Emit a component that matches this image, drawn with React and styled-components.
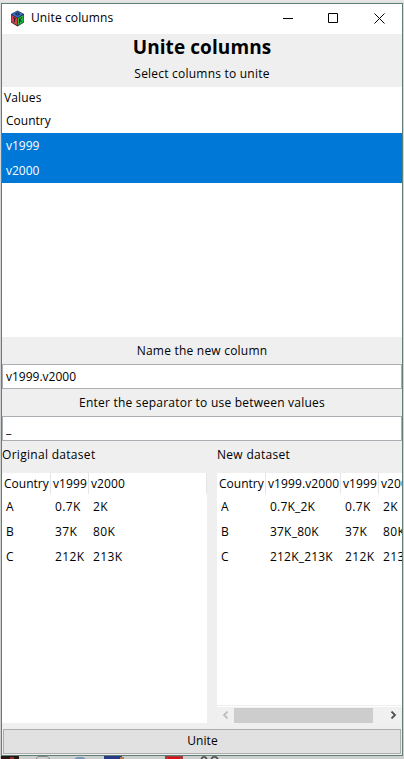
import React from 'react';
import styled, { createGlobalStyle } from 'styled-components';

const Global = createGlobalStyle`
  * { box-sizing: border-box; }
  html, body, #root { margin: 0; width: 404px; height: 759px; overflow: hidden; }
  body {
    font: 12px/20px "Open Sans", "Noto Sans", sans-serif;
    color: #000;
    background: #d4d6d6;
  }
`;

const Desktop = styled.div`
  width: 404px;
  height: 759px;
  padding: 3px 1px 0;
  background: linear-gradient(#e9e9e9 0, #dcdcdc 3px, #d2d6d5 40px, #cbd0ce 100%);
`;

const Window = styled.main`
  display: flex;
  flex-direction: column;
  height: 753px;
  border: 1px solid #5f8076;
  background: #efefef;
`;

const TitleBar = styled.header`
  display: flex;
  align-items: center;
  flex: 0 0 30px;
  padding: 0 0 2px 8px;
  background: #fff;
`;

const Text = styled.span`
  display: block;
  white-space: pre;
  letter-spacing: ${(p) => p.$spacing || 0}px;
`;

const Caption = styled(Text)`
  margin-left: 6px;
  flex: 1;
`;

const CaptionButton = styled.button`
  width: ${(p) => p.$width}px;
  height: 28px;
  padding: 0;
  border: 0;
  background: none;
  display: grid;
  place-items: center;
`;

const CaptionButtons = styled.div`
  display: flex;
`;

const Heading = styled.h1`
  margin: 0;
  flex: 0 0 27px;
  font-size: 19px;
  line-height: 26px;
  font-weight: 700;
  text-align: center;
  letter-spacing: 0.08px;
`;

const Prompt = styled(Text)`
  flex: 0 0 ${(p) => p.$height}px;
  min-height: 0;
  line-height: ${(p) => p.$line}px;
  text-align: center;
  letter-spacing: 0.22px;
`;

const List = styled.section`
  flex: 0 0 250px;
  background: #fff;
`;

const ListHeader = styled.div`
  height: 21px;
  padding-left: 2px;
  line-height: 22px;
  letter-spacing: 0.15px;
`;

const ListRow = styled.div`
  height: 25px;
  padding-left: 4px;
  line-height: 25px;
  color: ${(p) => (p.$selected ? '#fff' : '#000')};
  background: ${(p) => (p.$selected ? '#0078d7' : '#fff')};
`;

const Field = styled.input`
  flex: 0 0 25px;
  width: 400px;
  padding: 0 3px;
  border: 1px solid #abadb3;
  border-radius: 0;
  outline: 0;
  background: #fff;
  color: #000;
  font: inherit;
`;

const Datasets = styled.section`
  display: grid;
  grid-template-columns: 205px 185px;
  grid-template-rows: 282px;
  column-gap: 10px;
  flex: 0 0 282px;
`;

const Dataset = styled.div`
  display: flex;
  flex-direction: column;
  min-width: 0;
`;

const DatasetTitle = styled(Text)`
  flex: 0 0 32px;
  line-height: 28px;
`;

const Table = styled.div`
  flex: 1;
  min-height: 0;
  overflow: hidden;
  background: #fff;
`;

const TableRow = styled.div`
  display: grid;
  grid-template-columns: ${(p) => p.$columns};
  height: ${(p) => (p.$head ? 21 : 25)}px;
  line-height: ${(p) => (p.$head ? 21 : 25)}px;
`;

const HeadCell = styled(Text)`
  padding-left: 2px;
  border-right: 1px solid #e5e5e5;
`;

const Cell = styled(Text)`
  padding-left: 4px;
`;

const ScrollBar = styled.div`
  display: flex;
  align-items: center;
  flex: 0 0 18px;
  border-top: 1px solid #ededed;
  box-shadow: inset 0 1px #fff;
  background: #f0f0f0;
`;

const ScrollArrow = styled.span`
  display: grid;
  place-items: center;
  width: 17px;
  height: 15px;
  margin-top: 1px;
`;

const Thumb = styled.span`
  width: 139px;
  height: 15px;
  margin-top: 1px;
  background: #cdcdcd;
`;

const Track = styled.span`
  flex: 1;
`;

const UniteButton = styled.button`
  margin: 6px 1px 0;
  height: 25px;
  padding: 0 0 1px 1px;
  border: 1px solid #adadad;
  border-radius: 0;
  background: #e1e1e1;
  color: #000;
  font: inherit;
  letter-spacing: 0.1px;
`;

const Taskbar = styled.svg`
  display: block;
`;

function CubeIcon() {
  return (
    <svg width="15" height="17" viewBox="0 0 15 17">
      <path d="M7.5 .5 14 4V12.5l-6.5 4L1 12.5V4Z" fill="#25303c" />
      <path d="M7.5 1.1 13 4.2 7.5 7.4 2 4.2Z" fill="#3472dc" />
      <path d="M1.5 5 7.1 8.3v7L1.5 12Z" fill="#e2404a" />
      <path d="M7.9 8.3 13.5 5v7L7.9 15.3Z" fill="#28c044" />
      <path d="M9.3 3.2 7.6 2.7 5.4 4 7.5 5.3 9.4 4.3 8 4M2.8 7.2l3.2 1.9M4.4 8.2v4.2M9.5 8.6v4.8M12.1 7.2 9.6 10.3l2.6 1.4" fill="none" stroke="#101820" strokeWidth=".9" />
    </svg>
  );
}

const GLYPHS = {
  minimize: { d: 'M0 5.5H10', size: 10, width: 44 },
  maximize: { d: 'M.5 .5H9.5V9.5H.5Z', size: 10, width: 46 },
  close: { d: 'M.5 .5 10.5 10.5M10.5 .5 .5 10.5', size: 11, width: 46 },
};

function CaptionGlyph({ kind }) {
  const { d, size, width } = GLYPHS[kind];
  return (
    <CaptionButton aria-label={kind} $width={width}>
      <svg width={size} height={size}>
        <path d={d} fill="none" stroke="#000" />
      </svg>
    </CaptionButton>
  );
}

function Arrow({ path, color }) {
  return (
    <ScrollArrow>
      <svg width="7" height="8">
        <path d={path} fill="none" stroke={color} strokeWidth="1.8" />
      </svg>
    </ScrollArrow>
  );
}

function cellSpacing(value) {
  if (value.includes('_')) return 0.2;
  return value.length > 1 ? 0.35 : 0;
}

function DataTable({ columns, head, rows }) {
  return (
    <Table>
      <TableRow $head $columns={columns}>
        {head.map((h) => <HeadCell key={h} $spacing={h === 'Country' ? 0 : 0.1}>{h}</HeadCell>)}
      </TableRow>
      {rows.map((row) => (
        <TableRow key={row[0]} $columns={columns}>
          {row.map((c, i) => <Cell key={i} $spacing={cellSpacing(c)}>{c}</Cell>)}
        </TableRow>
      ))}
    </Table>
  );
}

export default function App() {
  return (
    <Desktop>
      <Global />
      <Window>
        <TitleBar>
          <CubeIcon />
          <Caption $spacing={0.12}>Unite columns</Caption>
          <CaptionButtons>
            <CaptionGlyph kind="minimize" />
            <CaptionGlyph kind="maximize" />
            <CaptionGlyph kind="close" />
          </CaptionButtons>
        </TitleBar>
        <Heading>Unite columns</Heading>
        <Prompt $height={26} $line={26}>Select columns to unite</Prompt>
        <List>
          <ListHeader>Values</ListHeader>
          <ListRow>Country</ListRow>
          <ListRow $selected>v1999</ListRow>
          <ListRow $selected>v2000</ListRow>
        </List>
        <Prompt $height={27} $line={28}>Name the new column</Prompt>
        <Field defaultValue="v1999.v2000" />
        <Prompt $height={27} $line={28}>Enter the separator to use between values</Prompt>
        <Field defaultValue="_" />
        <Datasets>
          <Dataset>
            <DatasetTitle $spacing={0.3}>Original dataset</DatasetTitle>
            <DataTable
              columns="49px 38px 118px"
              head={['Country', 'v1999', 'v2000']}
              rows={[['A', '0.7K', '2K'], ['B', '37K', '80K'], ['C', '212K', '213K']]}
            />
          </Dataset>
          <Dataset>
            <DatasetTitle $spacing={0.3}>New dataset</DatasetTitle>
            <DataTable
              columns="49px 75px 38px 38px"
              head={['Country', 'v1999.v2000', 'v1999', 'v2000']}
              rows={[
                ['A', '0.7K_2K', '0.7K', '2K'],
                ['B', '37K_80K', '37K', '80K'],
                ['C', '212K_213K', '212K', '213K'],
              ]}
            />
            <ScrollBar>
              <Arrow path="M5.5 .5 2 4 5.5 7.5" color="#bfbfbf" />
              <Thumb />
              <Track />
              <Arrow path="M1.5 .5 5 4 1.5 7.5" color="#505050" />
            </ScrollBar>
          </Dataset>
        </Datasets>
        <UniteButton>Unite</UniteButton>
      </Window>
      <Taskbar width="402" height="3">
        <path d="M0 0H18V3H0Z" fill="#251611" />
        <path d="M9 1H13V3H9Z" fill="#8c3526" />
        <path d="M35 3 37 .5H46L49 3" fill="none" stroke="#888" />
        <path d="M73 3 76 1H82L85 3Z" fill="#7e98bd" />
        <path d="M103 0H121V3H103Z" fill="#263b83" />
        <path d="M119 1H123V3H119Z" fill="#b87c4b" />
        <path d="M164 0H182V3H164Z" fill="#a43b3b" />
        <path d="M167 1H179V3H167Z" fill="#dc1118" />
        <path d="M200 3 202 1H204L206 3M210 3 212 1H215L217 3" fill="none" stroke="#444" strokeWidth="1.5" />
      </Taskbar>
    </Desktop>
  );
}
